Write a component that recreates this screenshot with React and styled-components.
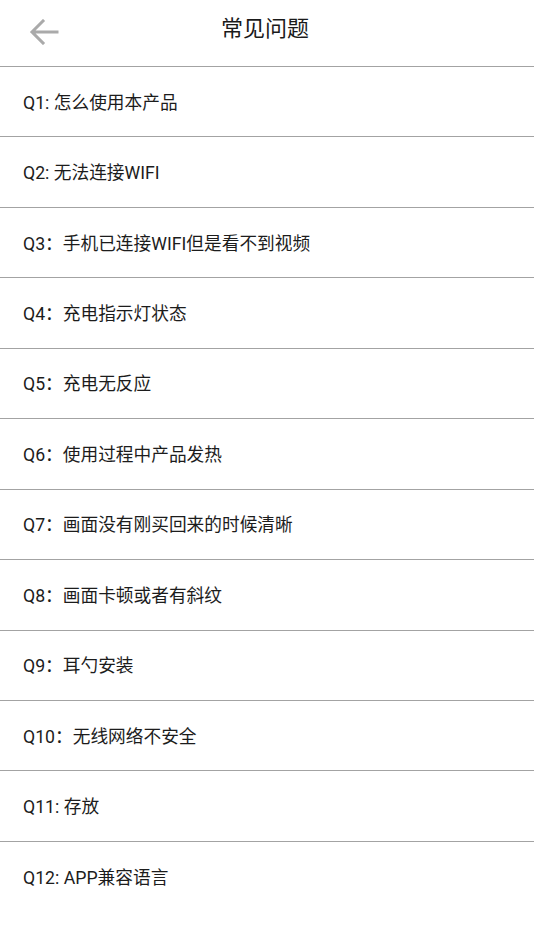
import React from 'react';
import styled, { createGlobalStyle } from 'styled-components';

const questions = [
  'Q1: 怎么使用本产品',
  'Q2: 无法连接WIFI',
  'Q3：手机已连接WIFI但是看不到视频',
  'Q4：充电指示灯状态',
  'Q5：充电无反应',
  'Q6：使用过程中产品发热',
  'Q7：画面没有刚买回来的时候清晰',
  'Q8：画面卡顿或者有斜纹',
  'Q9：耳勺安装',
  'Q10：无线网络不安全',
  'Q11: 存放',
  'Q12: APP兼容语言',
];

export default function App() {
  return (
    <Page>
      <GlobalStyle />
      <Header>
        <BackButton aria-label="back">
          <svg width="30" height="26" viewBox="0 0 30 26" fill="none">
            <path d="M28 13H4M14 2L3 13l11 11" stroke="#aaaaaa" strokeWidth="3" strokeLinecap="square" />
          </svg>
        </BackButton>
        <Title>常见问题</Title>
      </Header>
      <List>
        {questions.map((q) => (
          <Row key={q}>{q}</Row>
        ))}
      </List>
    </Page>
  );
}

const GlobalStyle = createGlobalStyle`
  html, body {
    margin: 0;
    padding: 0;
    background: #ffffff;
  }
`;

const Page = styled.div`
  width: 534px;
  min-height: 950px;
  background: #fff;
  font-family: Roboto, "Noto Sans CJK SC", sans-serif;
  color: #1c1c1c;
`;

const Header = styled.div`
  height: 67px;
  display: flex;
  align-items: center;
  justify-content: center;
  position: relative;
  border-bottom: 1px solid #a3a3a3;
  box-sizing: border-box;
`;

const BackButton = styled.div`
  position: absolute;
  left: 29px;
  top: 19px;
  display: flex;
`;

const Title = styled.div`
  font-size: 22px;
  color: #1a1a1a;
  margin-top: -14px;
  margin-left: -4px;
`;

const List = styled.div`
  display: flex;
  flex-direction: column;
`;

const Row = styled.div`
  height: 70.45px;
  box-sizing: border-box;
  display: flex;
  align-items: center;
  padding-left: 23px;
  padding-bottom: 2px;
  font-size: 17.7px;
  border-bottom: 1px solid #a3a3a3;

  &:last-child {
    border-bottom: none;
  }
`;
